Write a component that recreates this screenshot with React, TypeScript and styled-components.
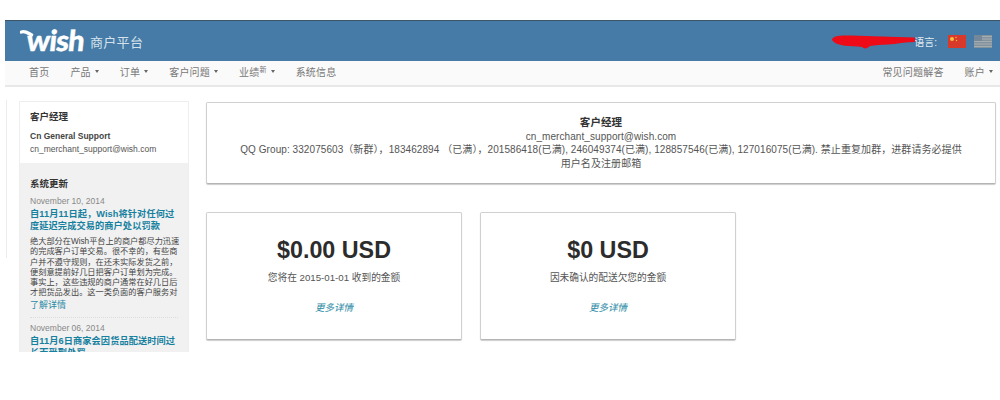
import React from "react";
import styled, { createGlobalStyle } from "styled-components";

const GlobalStyle = createGlobalStyle`
  html, body {
    margin: 0;
    background: #fff;
    font-family: "Liberation Sans", "Noto Sans CJK SC", sans-serif;
    color: #555;
  }
`;

const Page = styled.div`
  width: 1000px;
  height: 400px;
  padding-top: 20px;
  box-sizing: border-box;
  overflow: hidden;
  position: relative;
`;

const Header = styled.header`
  position: relative;
  margin-left: 5px;
  height: 41px;
  box-sizing: border-box;
  background: #457ba6;
  border-top: 1px solid #3b5468;
  display: flex;
  align-items: center;
  padding: 0 8px 0 14px;
`;

const Logo = styled.div`
  position: relative;
  width: 60px;
  height: 30px;
  padding-left: 8px;
  box-sizing: border-box;
  font-family: "Lato", "Liberation Sans", sans-serif;
  font-size: 29px;
  font-weight: 900;
  letter-spacing: -0.8px;
  -webkit-text-stroke: 0.4px #fff;
  color: #fff;
  line-height: 30px;
  white-space: nowrap;
  margin-top: -3px;
  transform: skewX(-6deg);
`;

const LogoTail = styled.svg`
  position: absolute;
  left: 0;
  top: 4px;
  width: 16px;
  height: 14px;
`;

const PortalName = styled.div`
  margin-left: 11px;
  font-size: 13px;
  letter-spacing: 0.3px;
  color: #d5e2ec;
`;

const LangBox = styled.div`
  margin-left: auto;
  display: flex;
  align-items: center;
  gap: 8px;
  font-size: 10px;
  color: #e3ecf3;
`;

const LangLabel = styled.span`
  margin-right: 3px;
`;

const Flag = styled.svg`
  width: 18px;
  height: 13px;
  display: block;
`;

const Scribble = styled.svg`
  position: absolute;
  left: 826px;
  top: 13px;
  width: 90px;
  height: 16px;
`;

const Nav = styled.nav`
  margin-left: 5px;
  height: 26px;
  box-sizing: border-box;
  background: #fafafa;
  border-bottom: 2px solid #e8e8e8;
  display: flex;
  align-items: center;
  justify-content: space-between;
  padding: 0 7px 3px 24px;
  font-size: 10px;
  letter-spacing: 0.2px;
  color: #777;
`;

const NavGroup = styled.div`
  display: flex;
  align-items: center;
  gap: 21px;
`;

const NavItem = styled.span`
  display: flex;
  align-items: center;
  gap: 4px;
  white-space: nowrap;
`;

const Caret = styled.i`
  width: 0;
  height: 0;
  border-left: 2.5px solid transparent;
  border-right: 2.5px solid transparent;
  border-top: 3px solid #666;
`;

const Sup = styled.sup`
  font-size: 7px;
  line-height: 0;
  vertical-align: 4px;
`;

const Main = styled.main`
  position: relative;
  display: flex;
  gap: 17px;
  padding: 14px 4px 0 19px;
  align-items: flex-start;
`;

const SideRule = styled.div`
  position: absolute;
  left: 6px;
  top: 13px;
  width: 1px;
  height: 158px;
  background: #ececec;
`;

const Sidebar = styled.aside`
  width: 170px;
  height: 251px;
  flex: none;
  overflow: hidden;
  box-sizing: border-box;
  border: 1px solid #eee;
  border-bottom: none;
  background: #f1f1f1;
`;

const ManagerBlock = styled.div`
  background: #fff;
  padding: 8px 10px 0;
  height: 61px;
  box-sizing: border-box;
`;

const SideTitle = styled.div`
  font-size: 9.5px;
  font-weight: 700;
  color: #333;
  line-height: 13px;
`;

const ManagerName = styled.div`
  margin-top: 7px;
  font-size: 8.5px;
  font-weight: 700;
  color: #444;
  line-height: 13px;
`;

const ManagerMail = styled.div`
  font-size: 8.5px;
  color: #555;
  line-height: 13px;
`;

const UpdatesBlock = styled.div`
  padding: 14px 10px 0;
`;

const UpdateItem = styled.div`
  margin-top: 6px;
  & + & {
    margin-top: 6px;
    padding-top: 5px;
    border-top: 1px dotted #ddd;
  }
`;

const UpdateDate = styled.div`
  font-size: 8.5px;
  color: #888;
  line-height: 11px;
`;

const UpdateTitle = styled.div`
  font-size: 9.2px;
  font-weight: 700;
  color: #16809f;
  line-height: 12px;
  margin-top: 1px;
  letter-spacing: 0.1px;
`;

const UpdateBody = styled.div`
  margin-top: 5px;
  font-size: 8.2px;
  color: #444;
  line-height: 10.3px;
`;

const BodyLine = styled.div`
  white-space: nowrap;
`;

const ReadMore = styled.div`
  font-size: 9px;
  color: #2a8aa5;
  line-height: 12px;
`;

const Content = styled.div`
  flex: 1;
  display: flex;
  flex-direction: column;
  gap: 28px;
  margin-top: 1px;
`;

const Card = styled.section`
  background: #fff;
  border: 1px solid #d0d0d0;
  border-bottom: 1px solid #b4b4b4;
  border-radius: 2px;
  box-shadow: 0 1px 1px #ccc;
  box-sizing: border-box;
`;

const ManagerCard = styled(Card)`
  height: 82px;
  padding: 13px 31px 0;
  text-align: center;
  font-size: 10px;
  letter-spacing: 0.07px;
  line-height: 13.5px;
  color: #555;
`;

const CardTitle = styled.div`
  font-size: 10.5px;
  font-weight: 700;
  color: #333;
`;

const CardRow = styled.div`
  display: flex;
  gap: 18px;
`;

const StatCard = styled(Card)`
  width: 256px;
  height: 128px;
  padding-top: 23px;
  text-align: center;
`;

const Amount = styled.div`
  font-size: 23.3px;
  font-weight: 700;
  color: #2c2c2c;
  line-height: 28px;
`;

const StatLabel = styled.div`
  margin-top: 7px;
  font-size: 9.7px;
  color: #555;
  line-height: 14px;
`;

const MoreLink = styled.div`
  margin-top: 16px;
  font-size: 9.5px;
  font-style: italic;
  color: #2a8aa5;
  line-height: 13px;
`;

const navLeft = [
  { label: "首页" },
  { label: "产品", caret: true },
  { label: "订单", caret: true },
  { label: "客户问题", caret: true },
  { label: "业绩", caret: true, sup: "新" },
  { label: "系统信息" },
];

const stats = [
  { amount: "$0.00 USD", label: "您将在 2015-01-01 收到的金额" },
  { amount: "$0 USD", label: "因未确认的配送欠您的金额" },
];

const updateLines = [
  "绝大部分在Wish平台上的商户都尽力迅速",
  "的完成客户订单交易。很不幸的，有些商",
  "户并不遵守规则，在还未实际发货之前，",
  "便刻意提前好几日把客户订单划为完成。",
  "事实上，这些违规的商户通常在好几日后",
  "才把货品发出。这一类负面的客户服务对",
];

export default function App() {
  return (
    <Page>
      <GlobalStyle />
      <Header>
        <Logo>
          <LogoTail viewBox="0 0 16 14">
            <path d="M1.5 3 C5 1.5 8 4 12 6" fill="none" stroke="#fff" strokeWidth="3.4" strokeLinecap="round" />
          </LogoTail>
          wish
        </Logo>
        <PortalName>商户平台</PortalName>
        <LangBox>
          <LangLabel>语言:</LangLabel>
          <Flag viewBox="0 0 18 13">
            <rect width="18" height="13" fill="#d8392b" />
            <circle cx="4" cy="4" r="2" fill="#f3c33c" />
            <circle cx="8" cy="2.5" r="0.7" fill="#f3c33c" />
            <circle cx="8.5" cy="5.5" r="0.7" fill="#f3c33c" />
          </Flag>
          <Flag viewBox="0 0 18 13">
            <rect width="18" height="13" fill="#84929c" />
            <path d="M0 1.5h18M0 4h18M0 6.5h18M0 9h18M0 11.5h18" stroke="#a4adb2" strokeWidth="1" />
            <rect width="8" height="6" fill="#75889a" />
          </Flag>
        </LangBox>
        <Scribble viewBox="0 0 90 16">
          <path
            d="M1 6 C1 2 8 1 20 1.5 C40 2 60 3 84 3.5 L84 8 C75 8 65 10 57 10.5 C50 11 44 11 39 12 C36 15 33 15 31 13 C22 12 6 13 1 6 Z"
            fill="#ee0a16"
          />
        </Scribble>
      </Header>
      <Nav>
        <NavGroup>
          {navLeft.map((item) => (
            <NavItem key={item.label}>
              <span>
                {item.label}
                {item.sup && <Sup>{item.sup}</Sup>}
              </span>
              {item.caret && <Caret />}
            </NavItem>
          ))}
        </NavGroup>
        <NavGroup>
          <NavItem>常见问题解答</NavItem>
          <NavItem>
            <span>账户</span>
            <Caret />
          </NavItem>
        </NavGroup>
      </Nav>
      <Main>
        <SideRule />
        <Sidebar>
          <ManagerBlock>
            <SideTitle>客户经理</SideTitle>
            <ManagerName>Cn General Support</ManagerName>
            <ManagerMail>cn_merchant_support@wish.com</ManagerMail>
          </ManagerBlock>
          <UpdatesBlock>
            <SideTitle>系统更新</SideTitle>
            <UpdateItem>
              <UpdateDate>November 10, 2014</UpdateDate>
              <UpdateTitle>自11月11日起，Wish将针对任何过度延迟完成交易的商户处以罚款</UpdateTitle>
              <UpdateBody>
                {updateLines.map((line) => (
                  <BodyLine key={line}>{line}</BodyLine>
                ))}
              </UpdateBody>
              <ReadMore>了解详情</ReadMore>
            </UpdateItem>
            <UpdateItem>
              <UpdateDate>November 06, 2014</UpdateDate>
              <UpdateTitle>自11月6日商家会因货品配送时间过长而受到处罚</UpdateTitle>
            </UpdateItem>
          </UpdatesBlock>
        </Sidebar>
        <Content>
          <ManagerCard>
            <CardTitle>客户经理</CardTitle>
            <div>cn_merchant_support@wish.com</div>
            <div>
              QQ Group: 332075603（新群），183462894 （已满），201586418(已满), 246049374(已满), 128857546(已满), 127016075(已满). 禁止重复加群，进群请务必提供用户名及注册邮箱
            </div>
          </ManagerCard>
          <CardRow>
            {stats.map((s) => (
              <StatCard key={s.amount}>
                <Amount>{s.amount}</Amount>
                <StatLabel>{s.label}</StatLabel>
                <MoreLink>更多详情</MoreLink>
              </StatCard>
            ))}
          </CardRow>
        </Content>
      </Main>
    </Page>
  );
}
